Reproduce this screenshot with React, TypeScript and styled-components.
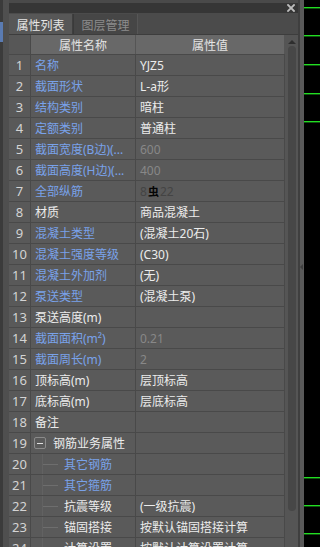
import React from 'react';
import styled, { createGlobalStyle } from 'styled-components';

const Global = createGlobalStyle`
  html, body { margin: 0; padding: 0; background: #000; overflow: hidden; }
  body { font-family: "Noto Sans", "Noto Sans CJK SC", sans-serif; font-size: 12px; }
`;

const Screen = styled.div`
  display: flex;
  width: 320px;
  height: 547px;
  overflow: hidden;
`;

const Dock = styled.div`
  width: 9px;
  flex-shrink: 0;
  display: flex;
`;

const DockEdge = styled.div`
  width: 3px;
  background: #3b3b3b;
  display: flex;
  flex-direction: column;
  padding-top: 22px;
  box-sizing: border-box;
`;

const DockTab = styled.div`
  height: 20px;
  background: #5a7bb2;
`;

const DockBody = styled.div`
  flex: 1;
  background: #4f4f4f;
`;

const Panel = styled.div`
  width: 291px;
  flex-shrink: 0;
  display: flex;
  flex-direction: column;
  background: #4b4b4b;
  border-right: 2px solid #3f3f3f;
  box-sizing: border-box;
`;

const TopGap = styled.div`
  height: 3px;
  background: #4a4a4a;
`;

const TitleBar = styled.div`
  height: 10px;
  background: #363636;
  display: flex;
  align-items: center;
  justify-content: flex-end;
  padding-right: 3px;
`;

const TabBar = styled.div`
  height: 22px;
  box-sizing: border-box;
  display: flex;
  align-items: stretch;
  padding-top: 1px;
  background: #4b4b4b;
  border-bottom: 1px solid #3d3d3d;
`;

const Tab = styled.div<{ $active?: boolean }>`
  width: ${p => (p.$active ? 64 : 65)}px;
  box-sizing: border-box;
  display: flex;
  align-items: center;
  justify-content: center;
  font-family: "Noto Sans CJK SC", sans-serif;
  font-size: 12px;
  color: ${p => (p.$active ? '#e6e6e6' : '#8c8c8c')};
  background: ${p => (p.$active ? '#575757' : '#464646')};
  border-right: 1px solid ${p => (p.$active ? '#3f3f3f' : '#565656')};
  border-left: ${p => (p.$active ? 'none' : '1px solid #3a3a3a')};
`;

const Body = styled.div`
  flex: 1;
  min-height: 0;
  display: flex;
`;

const Table = styled.div`
  width: 276px;
  flex-shrink: 0;
  display: flex;
  flex-direction: column;
  background: #5a5a5a;
  overflow: hidden;
`;

const Row = styled.div<{ $header?: boolean }>`
  display: grid;
  grid-template-columns: 22px 105px 149px;
  height: ${p => (p.$header ? 20 : 21)}px;
  flex-shrink: 0;
  box-sizing: border-box;
  border-bottom: 1px solid #494949;
  background: ${p => (p.$header ? '#686868' : '#5a5a5a')};
`;

type Tone = 'blue' | 'white' | 'gray' | 'dim';

const toneColor: Record<Tone, string> = {
  blue: '#79a2ea',
  white: '#ececec',
  gray: '#888888',
  dim: '#444444',
};

const Cell = styled.div<{ $tone?: Tone }>`
  display: flex;
  align-items: center;
  padding-left: 4px;
  border-right: 1px solid #494949;
  white-space: nowrap;
  overflow: hidden;
  font-size: 12px;
  color: ${p => toneColor[p.$tone ?? 'white']};
`;

const NumCell = styled.div<{ $corner?: boolean }>`
  display: flex;
  align-items: center;
  justify-content: center;
  border-right: 1px solid #494949;
  background: ${p => (p.$corner ? '#575757' : '#595959')};
  color: #d4d4d4;
  font-size: 13px;
`;

const HeadCell = styled.div`
  display: flex;
  align-items: center;
  justify-content: center;
  border-right: 1px solid #555;
  color: #e4e4e4;
  font-size: 12px;
`;

const Toggle = styled.div`
  width: 12px;
  height: 12px;
  box-sizing: border-box;
  border: 1px solid #8a8a8a;
  border-radius: 2px;
  display: flex;
  align-items: center;
  justify-content: center;
  margin-left: -1px;
  margin-right: 7px;
  flex-shrink: 0;
  &::after {
    content: '';
    width: 6px;
    height: 1px;
    background: #e0e0e0;
  }
`;

const Branch = styled.div`
  align-self: stretch;
  width: 15px;
  margin-left: 7px;
  margin-right: 6px;
  flex-shrink: 0;
  border-left: 1px solid #626262;
  display: flex;
  align-items: center;
  &::after {
    content: '';
    width: 15px;
    height: 1px;
    background: #6e6e6e;
  }
`;

const Mark = styled.span`
  color: #050505;
  font-family: "Noto Sans CJK SC", sans-serif;
  font-size: 11px;
  font-weight: 700;
  vertical-align: 2px;
  margin: 0 1px;
`;

const Scroll = styled.div`
  width: 13px;
  flex-shrink: 0;
  background: #555;
  display: flex;
  flex-direction: column;
  align-items: center;
  padding-top: 5px;
  box-sizing: border-box;
`;

const UpArrow = styled.div`
  width: 0;
  height: 0;
  border-left: 4px solid transparent;
  border-right: 4px solid transparent;
  border-bottom: 4px solid #2e2e2e;
`;

const Thumb = styled.div`
  margin-top: 2px;
  width: 8px;
  height: 465px;
  border-radius: 4px;
  background: #474747;
`;

const Splitter = styled.div`
  width: 4px;
  flex-shrink: 0;
  background: #595959;
  display: flex;
  flex-direction: column;
  padding-top: 264px;
  box-sizing: border-box;
`;

const SplitArrow = styled.div`
  width: 0;
  height: 0;
  border-top: 3px solid transparent;
  border-bottom: 3px solid transparent;
  border-right: 3px solid #3f3f3f;
`;

const Canvas = styled.div`
  flex: 1;
  background: #000;
  display: flex;
`;

interface Item {
  name: string;
  tone: Tone;
  value?: React.ReactNode;
  vtone?: Tone;
  tree?: 'parent' | 'child';
}

const rows: Item[] = [
  { name: '名称', tone: 'blue', value: 'YJZ5' },
  { name: '截面形状', tone: 'blue', value: 'L-a形' },
  { name: '结构类别', tone: 'blue', value: '暗柱' },
  { name: '定额类别', tone: 'blue', value: '普通柱' },
  { name: '截面宽度(B边)(...', tone: 'blue', value: '600', vtone: 'gray' },
  { name: '截面高度(H边)(...', tone: 'blue', value: '400', vtone: 'gray' },
  { name: '全部纵筋', tone: 'blue', value: <>8<Mark>虫</Mark>22</>, vtone: 'dim' },
  { name: '材质', tone: 'white', value: '商品混凝土' },
  { name: '混凝土类型', tone: 'blue', value: '(混凝土20石)' },
  { name: '混凝土强度等级', tone: 'blue', value: '(C30)' },
  { name: '混凝土外加剂', tone: 'blue', value: '(无)' },
  { name: '泵送类型', tone: 'blue', value: '(混凝土泵)' },
  { name: '泵送高度(m)', tone: 'white' },
  { name: '截面面积(m²)', tone: 'blue', value: '0.21', vtone: 'gray' },
  { name: '截面周长(m)', tone: 'blue', value: '2', vtone: 'gray' },
  { name: '顶标高(m)', tone: 'white', value: '层顶标高' },
  { name: '底标高(m)', tone: 'white', value: '层底标高' },
  { name: '备注', tone: 'white' },
  { name: '钢筋业务属性', tone: 'white', tree: 'parent' },
  { name: '其它钢筋', tone: 'blue', tree: 'child' },
  { name: '其它箍筋', tone: 'blue', tree: 'child' },
  { name: '抗震等级', tone: 'white', value: '(一级抗震)', tree: 'child' },
  { name: '锚固搭接', tone: 'white', value: '按默认锚固搭接计算', tree: 'child' },
  { name: '计算设置', tone: 'white', value: '按默认计算设置计算', tree: 'child' },
];

const CloseIcon = () => (
  <svg width="8" height="8" viewBox="0 0 8 8">
    <path d="M1 1L7 7M7 1L1 7" stroke="#bdbdbd" strokeWidth="1.8" strokeLinecap="square" />
  </svg>
);

const greenLines = [7, 35, 64, 93, 121, 477, 505, 533];

const CanvasDrawing = () => (
  <svg width="16" height="547" viewBox="0 0 16 547">
    {greenLines.map(y => (
      <rect key={y} x="0" y={y} width="16" height="1.4" fill="#22dd22" />
    ))}
  </svg>
);

export default function App() {
  return (
    <>
      <Global />
      <Screen>
        <Dock>
          <DockEdge>
            <DockTab />
          </DockEdge>
          <DockBody />
        </Dock>
        <Panel>
          <TopGap />
          <TitleBar>
            <CloseIcon />
          </TitleBar>
          <TabBar>
            <Tab $active>属性列表</Tab>
            <Tab>图层管理</Tab>
          </TabBar>
          <Body>
            <Table>
              <Row $header>
                <NumCell $corner />
                <HeadCell>属性名称</HeadCell>
                <HeadCell>属性值</HeadCell>
              </Row>
              {rows.map((r, i) => (
                <Row key={i}>
                  <NumCell>{i + 1}</NumCell>
                  <Cell $tone={r.tone}>
                    {r.tree === 'parent' && <Toggle />}
                    {r.tree === 'child' && <Branch />}
                    {r.name}
                  </Cell>
                  <Cell $tone={r.vtone ?? 'white'}>{r.value}</Cell>
                </Row>
              ))}
            </Table>
            <Scroll>
              <UpArrow />
              <Thumb />
            </Scroll>
          </Body>
        </Panel>
        <Splitter>
          <SplitArrow />
        </Splitter>
        <Canvas>
          <CanvasDrawing />
        </Canvas>
      </Screen>
    </>
  );
}
